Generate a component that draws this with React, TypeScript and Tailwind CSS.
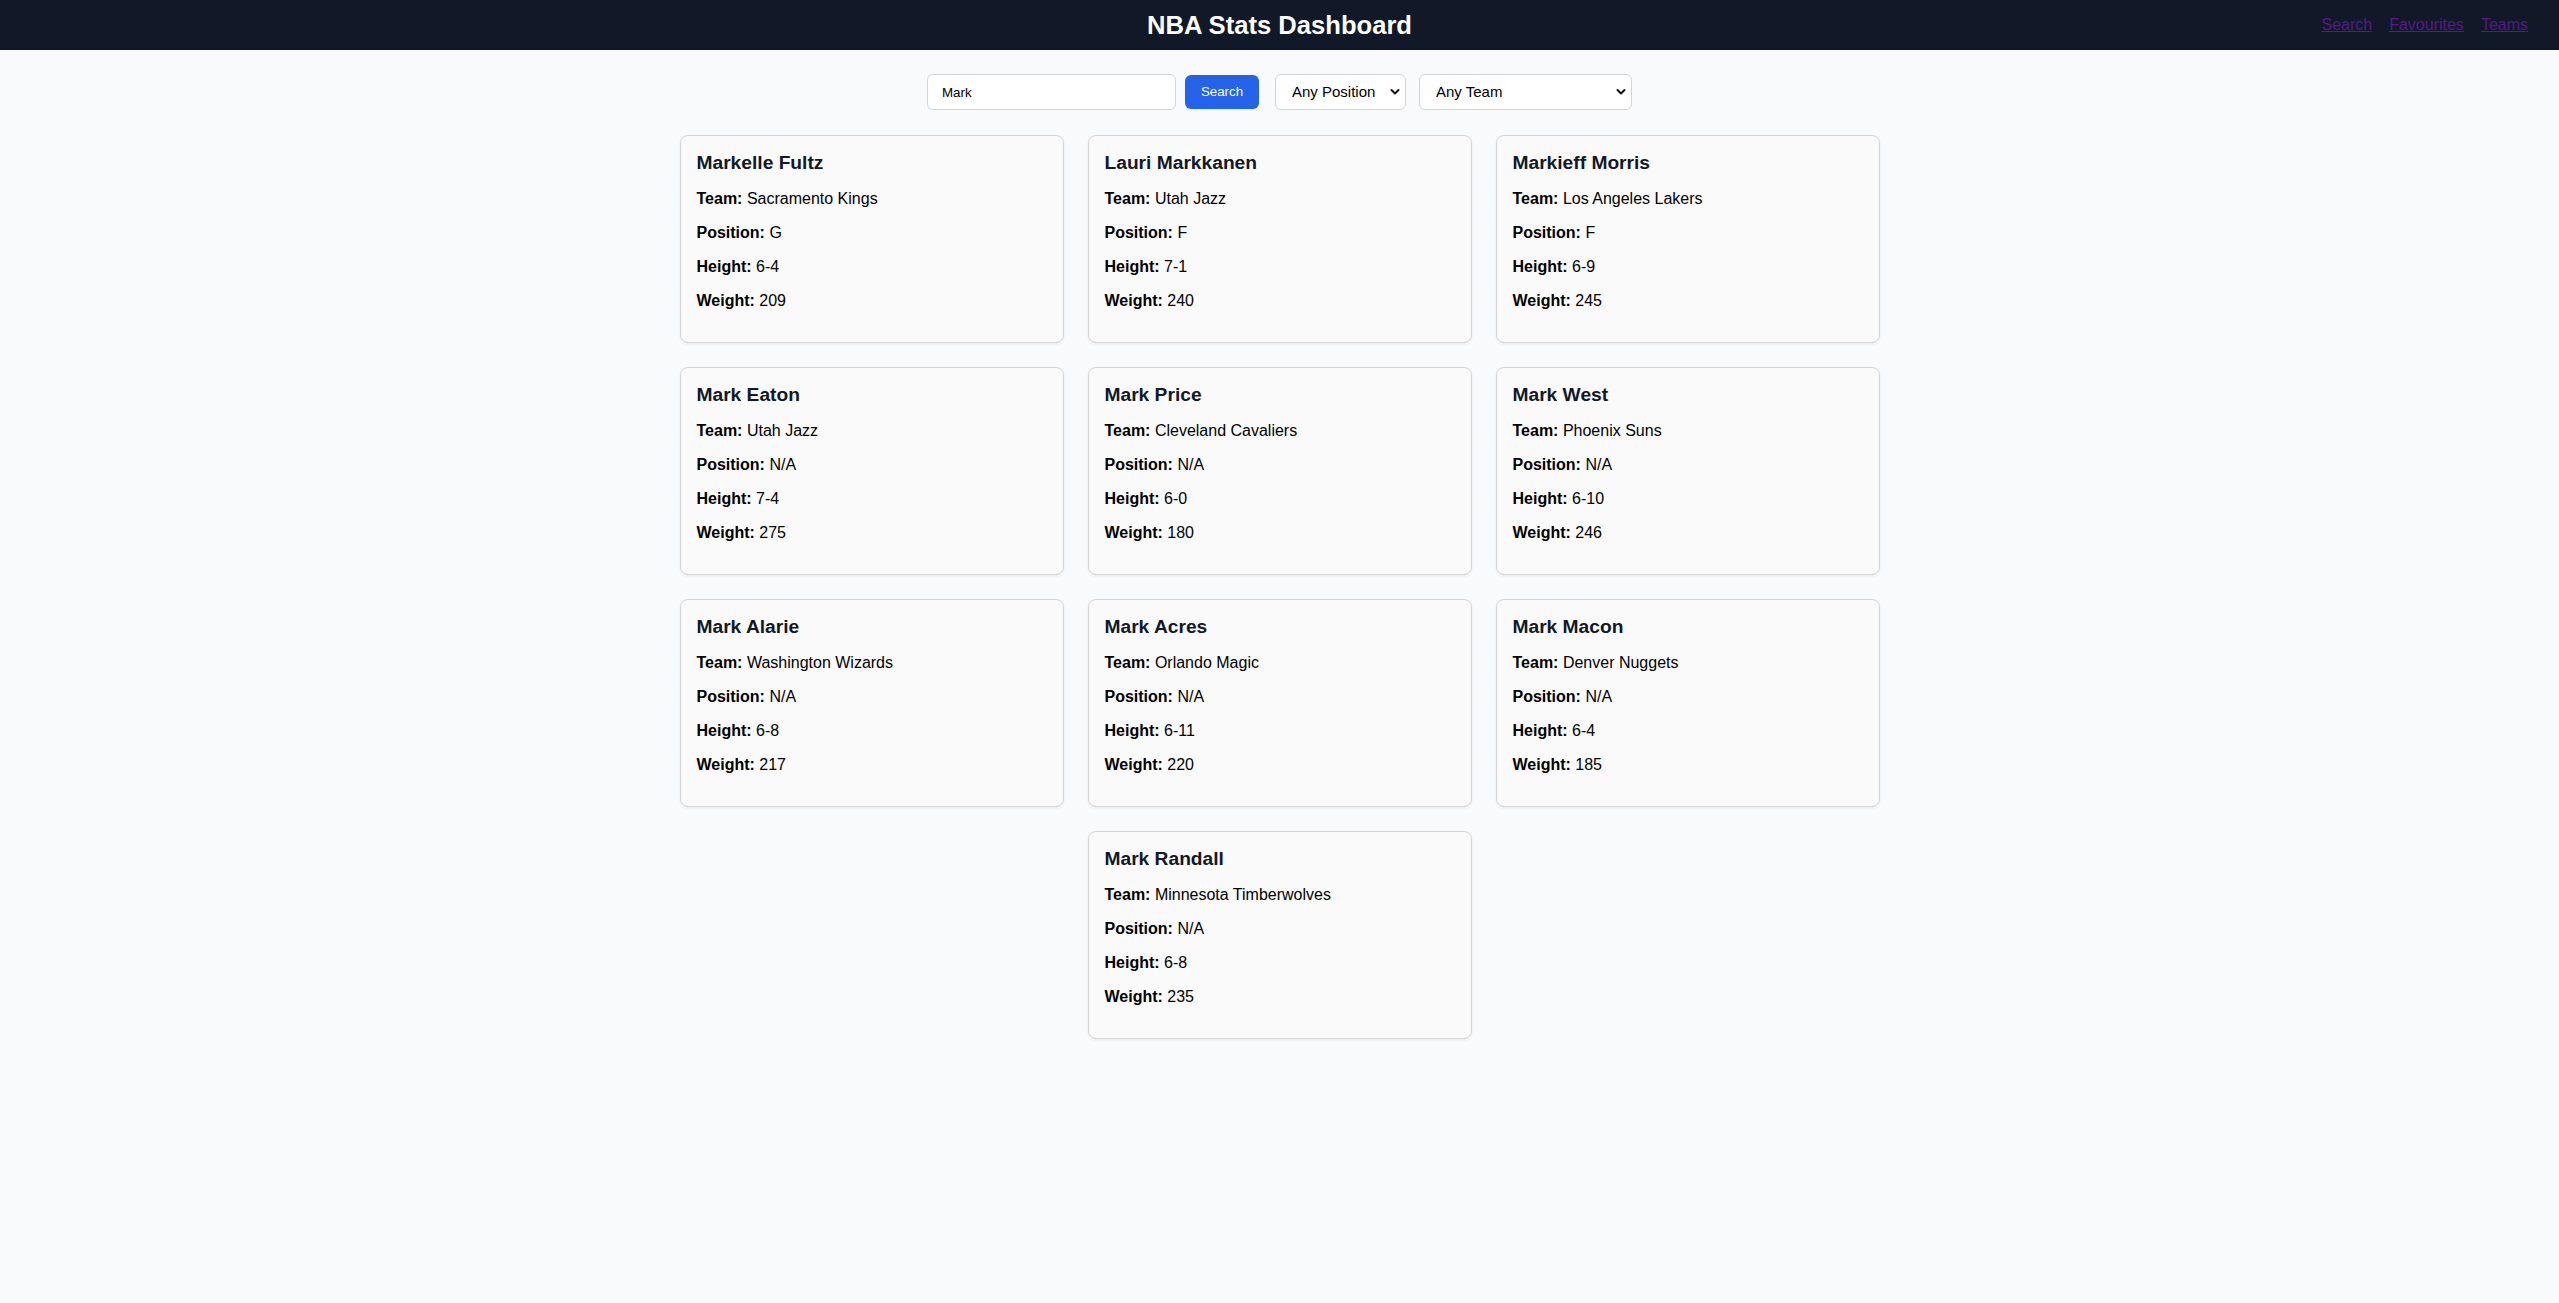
import { useState } from 'react';

type Player = {
    name: string;
    team: string;
    position: string;
    height: string;
    weight: string;
};

const players: Player[] = [
    { name: 'Markelle Fultz', team: 'Sacramento Kings', position: 'G', height: '6-4', weight: '209' },
    { name: 'Lauri Markkanen', team: 'Utah Jazz', position: 'F', height: '7-1', weight: '240' },
    { name: 'Markieff Morris', team: 'Los Angeles Lakers', position: 'F', height: '6-9', weight: '245' },
    { name: 'Mark Eaton', team: 'Utah Jazz', position: 'N/A', height: '7-4', weight: '275' },
    { name: 'Mark Price', team: 'Cleveland Cavaliers', position: 'N/A', height: '6-0', weight: '180' },
    { name: 'Mark West', team: 'Phoenix Suns', position: 'N/A', height: '6-10', weight: '246' },
    { name: 'Mark Alarie', team: 'Washington Wizards', position: 'N/A', height: '6-8', weight: '217' },
    { name: 'Mark Acres', team: 'Orlando Magic', position: 'N/A', height: '6-11', weight: '220' },
    { name: 'Mark Macon', team: 'Denver Nuggets', position: 'N/A', height: '6-4', weight: '185' },
    { name: 'Mark Randall', team: 'Minnesota Timberwolves', position: 'N/A', height: '6-8', weight: '235' },
];

function Chevron() {
    return (
        <svg
            className="pointer-events-none absolute right-[6px] top-1/2 -translate-y-1/2"
            width="10"
            height="7"
            viewBox="0 0 10 7"
            fill="none"
        >
            <path d="M1.5 1.5 L5 5 L8.5 1.5" stroke="#111" strokeWidth="2" strokeLinecap="round" strokeLinejoin="round" />
        </svg>
    );
}

function PlayerCard({ player }: { player: Player }) {
    return (
        <div className="w-[384px] rounded-lg border border-[#d6d6d6] bg-[#fafafa] px-4 pt-4 pb-8 shadow-[0_1px_3px_rgba(0,0,0,0.07)]">
            <h3 className="mb-4 text-[19.2px] font-bold leading-[22px] text-[#111827]">{player.name}</h3>
            <div className="flex flex-col gap-4 text-[16px] leading-[18px] text-black">
                <p><span className="font-bold">Team:</span> {player.team}</p>
                <p><span className="font-bold">Position:</span> {player.position}</p>
                <p><span className="font-bold">Height:</span> {player.height}</p>
                <p><span className="font-bold">Weight:</span> {player.weight}</p>
            </div>
        </div>
    );
}

export default function App() {
    const [query, setQuery] = useState('Mark');

    return (
        <div className="min-h-screen bg-[#f9fafb] font-['Liberation_Sans',Arial,sans-serif]">
            {/* Top bar */}
            <header className="grid h-[50px] grid-cols-[1fr_auto_1fr] items-center bg-[#111827] px-[31px]">
                <div />
                <h1 className="text-[25.6px] font-bold text-white">NBA Stats Dashboard</h1>
                <nav className="flex justify-end gap-[17px] text-[16px]">
                    <a href="#" className="text-[#551a8b] underline">Search</a>
                    <a href="#" className="text-[#551a8b] underline">Favourites</a>
                    <a href="#" className="text-[#551a8b] underline">Teams</a>
                </nav>
            </header>

            {/* Filters */}
            <div className="flex items-center justify-center pt-6">
                <input
                    type="text"
                    value={query}
                    onChange={(e) => setQuery(e.target.value)}
                    className="h-[36px] w-[249px] rounded-md border border-[#d1d5db] bg-white pl-[14px] text-[13.33px] text-black outline-none"
                />
                <button className="ml-[9px] h-[34px] w-[74px] rounded-md bg-[#2563eb] text-[13.33px] text-white">
                    Search
                </button>
                <div className="relative ml-[16px]">
                    <select className="h-[36px] w-[131px] appearance-none rounded-md border border-[#d1d5db] bg-white pl-4 text-[15px] text-black outline-none">
                        <option>Any Position</option>
                        <option>G</option>
                        <option>F</option>
                        <option>C</option>
                    </select>
                    <Chevron />
                </div>
                <div className="relative ml-[13px]">
                    <select className="h-[36px] w-[213px] appearance-none rounded-md border border-[#d1d5db] bg-white pl-4 text-[15px] text-black outline-none">
                        <option>Any Team</option>
                    </select>
                    <Chevron />
                </div>
            </div>

            {/* Results */}
            <div className="mx-auto mt-[25px] flex max-w-[1200px] flex-wrap justify-center gap-6 pb-10">
                {players.map((p) => (
                    <PlayerCard key={p.name} player={p} />
                ))}
            </div>
        </div>
    );
}
